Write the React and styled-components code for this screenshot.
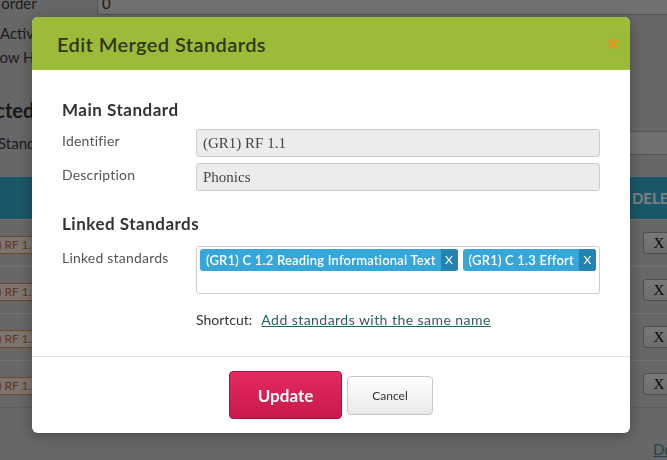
import React from 'react';
import styled, { createGlobalStyle } from 'styled-components';

const GlobalStyle = createGlobalStyle`
    html, body {
        margin: 0;
        padding: 0;
    }
    body {
        width: 667px;
        height: 460px;
        overflow: hidden;
        background: #cecece;
        font-family: Lato, "Open Sans", sans-serif;
        color: #333;
    }
`;

/* ---------- page behind the dialog ---------- */

const Page = styled.div`
    margin: -10px 0 0 -30px;
    width: 724px;
`;

const FormRow = styled.div`
    display: grid;
    grid-template-columns: 127px 1fr;
    align-items: center;
    height: ${p => p.h || 24}px;
    margin-top: ${p => p.mt || 0}px;
`;

const RowLabel = styled.span`
    font-size: 15px;
    color: #3a3a3a;
    white-space: nowrap;
    margin-left: ${p => p.inset || 0}px;
`;

const RowInput = styled.div`
    height: 100%;
    box-sizing: border-box;
    border: 1px solid #a9a9a9;
    border-right: none;
    background: #e2e2e2;
    padding: 0 4px;
    display: flex;
    align-items: center;
    font-size: 15px;
`;

const PageHeading = styled.h2`
    margin: 28px 0 0 ${p => p.inset || 0}px;
    font-size: 20px;
    line-height: 26px;
    font-weight: 700;
    color: #333;
    white-space: nowrap;
`;

const Table = styled.div`
    margin-top: 22px;
    border-bottom: 1px solid #bcbcbc;
`;

const HeadRow = styled.div`
    display: flex;
    align-items: center;
    height: 42px;
    background: #35aed2;
    color: #fff;
    font-weight: 700;
    font-size: 15px;
`;

const BodyRow = styled.div`
    display: flex;
    align-items: center;
    height: 47px;
    border-top: 1px solid #e6e6e6;
    box-sizing: border-box;
`;

const Cell = styled.div`
    flex: 1;
    min-width: 0;
`;

const DeleteCell = styled.div`
    width: 70px;
    display: flex;
    justify-content: ${p => p.head ? 'center' : 'flex-start'};
    padding-left: ${p => p.head ? 0 : 19}px;
    box-sizing: border-box;
`;

const CodeTag = styled.span`
    display: inline-block;
    margin-left: -3px;
    font-size: 12px;
    line-height: 16px;
    padding: 0 4px;
    color: #c8683a;
    border: 1px solid #e88b50;
    border-radius: 2px;
    background: #fbe9dc;
`;

const XButton = styled.button`
    width: 32px;
    height: 22px;
    padding: 0;
    border: 1px solid #9a9a9a;
    border-radius: 3px;
    background: linear-gradient(#f2f2f2, #dadada);
    font-family: "Liberation Serif", serif;
    font-size: 15px;
    color: #111;
`;

const PageLink = styled.a`
    display: block;
    margin: 32px 0 0 683px;
    font-size: 15px;
    line-height: 18px;
    color: #3e8e98;
    white-space: nowrap;
`;

/* ---------- overlay + dialog ---------- */

const Backdrop = styled.div`
    position: fixed;
    inset: 0;
    background: rgba(0, 0, 0, 0.5);
`;

const Modal = styled.div`
    position: fixed;
    top: 17px;
    left: 32px;
    width: 598px;
    background: #fff;
    border-radius: 6px;
    overflow: hidden;
    box-shadow: 0 3px 14px rgba(0, 0, 0, 0.3);
`;

const ModalHeader = styled.div`
    height: 53px;
    background: #9cbb38;
    display: flex;
    align-items: center;
    justify-content: space-between;
    padding: 0 11px 0 25px;
`;

const Title = styled.h1`
    margin: 0;
    font-size: 20px;
    letter-spacing: 0.4px;
    font-weight: 600;
    color: #2f361c;
`;

const Close = styled.button`
    border: none;
    background: none;
    padding: 0;
    width: 13px;
    height: 13px;
    display: flex;
    align-items: center;
    justify-content: center;
`;

const ModalBody = styled.div`
    padding: 30px 30px 26px;
`;

const Section = styled.h3`
    margin: ${p => p.first ? 0 : 23}px 0 ${p => p.first ? 9 : 12}px;
    font-size: 17px;
    letter-spacing: 0.5px;
    line-height: 20px;
    font-weight: 700;
    color: #333;
`;

const Field = styled.div`
    display: grid;
    grid-template-columns: 134px 1fr;
    align-items: start;
    & + & {
        margin-top: 6px;
    }
`;

const Label = styled.label`
    padding-top: 2px;
    font-size: 14px;
    letter-spacing: 0.2px;
    line-height: 20px;
    color: #555;
`;

const Input = styled.input`
    height: 28px;
    box-sizing: border-box;
    border: 1px solid #cdcdcd;
    border-radius: 3px;
    background: #ececec;
    padding: 0 6px;
    font-family: "Liberation Serif", Georgia, serif;
    font-size: 15px;
    color: #444;
    outline: none;
`;

const TagBox = styled.div`
    min-height: 48px;
    box-sizing: border-box;
    border: 1px solid #cdcdcd;
    border-radius: 3px;
    padding: 2px 3px;
    display: flex;
    flex-wrap: wrap;
    align-items: flex-start;
    gap: 5px;
`;

const Tag = styled.span`
    display: inline-flex;
    height: 22px;
    border-radius: 3px;
    overflow: hidden;
    background: #37a7d9;
    color: #fff;
    font-size: 13px;
    font-weight: 600;
    letter-spacing: 0.2px;
    line-height: 22px;
`;

const TagText = styled.span`
    padding: 0 5px 0 6px;
    white-space: nowrap;
`;

const TagRemove = styled.span`
    width: 17px;
    text-align: center;
    background: #2483b0;
    font-weight: 400;
    font-size: 12px;
`;

const Shortcut = styled.div`
    margin-top: 16px;
    padding-left: 134px;
    font-size: 14px;
    line-height: 20px;
    color: #333;
`;

const ShortcutLink = styled.a`
    margin-left: 9px;
    letter-spacing: 0.45px;
    color: #1f6462;
    text-decoration: underline;
`;

const ModalFooter = styled.div`
    border-top: 1px solid #e4e4e4;
    height: 76px;
    display: flex;
    align-items: center;
    justify-content: center;
    gap: 5px;
`;

const Button = styled.button`
    box-sizing: border-box;
    border-radius: 4px;
    font-family: Lato, "Open Sans", sans-serif;
    cursor: pointer;
    ${p => p.primary ? `
        width: 113px;
        height: 48px;
        border: 1px solid #a9123d;
        background: linear-gradient(#e42a5f, #c9184b);
        color: #fff;
        font-size: 17px;
        font-weight: 700;
    ` : `
        width: 86px;
        height: 39px;
        border: 1px solid #c6c6c6;
        background: linear-gradient(#ffffff, #e9e9e9);
        color: #333;
        font-size: 12px;
    `}
`;

const rows = ['RF 1.1', 'RF 1.2', 'RF 1.3', 'RF 1.4'];

export default function App() {
    return (
        <>
            <GlobalStyle />
            <Page>
                <FormRow h={25}>
                    <RowLabel>Sort order</RowLabel>
                    <RowInput>0</RowInput>
                </FormRow>
                <FormRow mt={6}>
                    <RowLabel inset={30}>Active</RowLabel>
                </FormRow>
                <FormRow>
                    <RowLabel inset={13}>Show Hidden</RowLabel>
                </FormRow>
                <PageHeading inset={-12}>Selected</PageHeading>
                <FormRow mt={8}>
                    <RowLabel inset={28}>Standard</RowLabel>
                    <RowInput />
                </FormRow>
                <Table>
                    <HeadRow>
                        <Cell />
                        <DeleteCell head>DELETE</DeleteCell>
                    </HeadRow>
                    {rows.map(r => (
                        <BodyRow key={r}>
                            <Cell>
                                <CodeTag>(GR1) {r}</CodeTag>
                            </Cell>
                            <DeleteCell>
                                <XButton>X</XButton>
                            </DeleteCell>
                        </BodyRow>
                    ))}
                </Table>
                <PageLink href="#">Done</PageLink>
            </Page>

            <Backdrop />

            <Modal>
                <ModalHeader>
                    <Title>Edit Merged Standards</Title>
                    <Close aria-label="close">
                        <svg width="10" height="10" viewBox="0 0 10 10">
                            <path d="M1.5 1.5 L8.5 8.5 M8.5 1.5 L1.5 8.5" stroke="#f28f1d" strokeWidth="2.6" strokeLinecap="round" />
                        </svg>
                    </Close>
                </ModalHeader>
                <ModalBody>
                    <Section first>Main Standard</Section>
                    <Field>
                        <Label>Identifier</Label>
                        <Input readOnly value="(GR1) RF 1.1" />
                    </Field>
                    <Field>
                        <Label>Description</Label>
                        <Input readOnly value="Phonics" />
                    </Field>

                    <Section>Linked Standards</Section>
                    <Field>
                        <Label>Linked standards</Label>
                        <TagBox>
                            <Tag>
                                <TagText>(GR1) C 1.2 Reading Informational Text</TagText>
                                <TagRemove>X</TagRemove>
                            </Tag>
                            <Tag>
                                <TagText>(GR1) C 1.3 Effort</TagText>
                                <TagRemove>X</TagRemove>
                            </Tag>
                        </TagBox>
                    </Field>
                    <Shortcut>
                        Shortcut:
                        <ShortcutLink href="#">Add standards with the same name</ShortcutLink>
                    </Shortcut>
                </ModalBody>
                <ModalFooter>
                    <Button primary>Update</Button>
                    <Button>Cancel</Button>
                </ModalFooter>
            </Modal>
        </>
    );
}
